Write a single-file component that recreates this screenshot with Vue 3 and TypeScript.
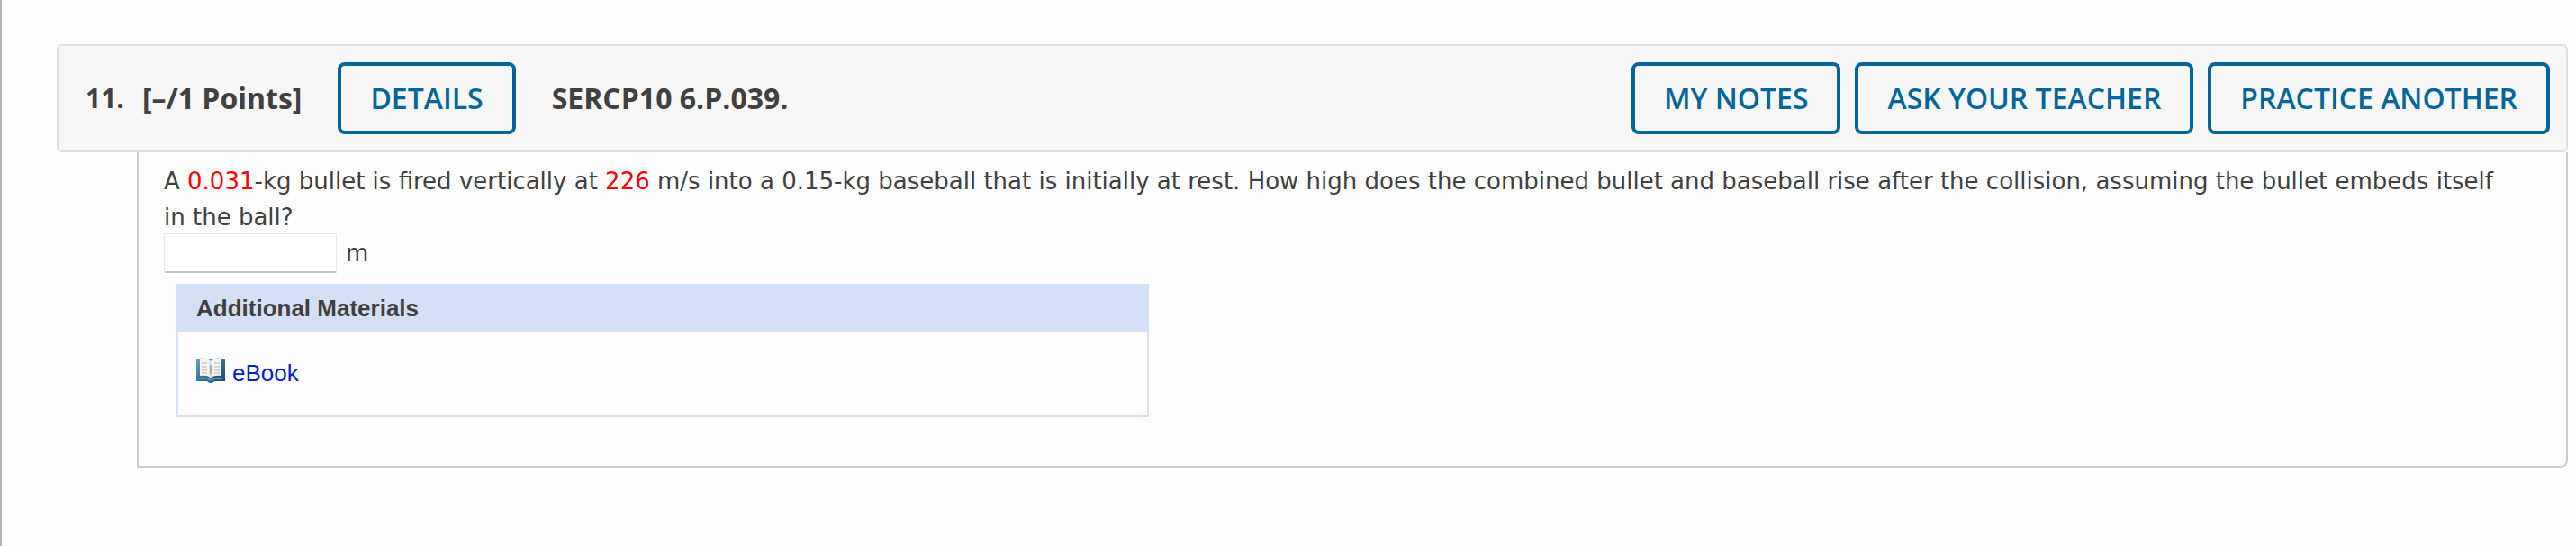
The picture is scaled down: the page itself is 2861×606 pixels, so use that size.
<script setup lang="ts">
import { ref } from 'vue'

const answer = ref('')
const actions: string[] = ['My Notes', 'Ask Your Teacher', 'Practice Another']
</script>

<template>
  <main class="page">
    <article class="question">
      <header class="bar">
        <h2 class="title">
          <span class="number">11.</span>
          <span class="points">[–/1 Points]</span>
        </h2>
        <button type="button" class="btn">Details</button>
        <span class="code">SERCP10 6.P.039.</span>
        <div class="actions">
          <button v-for="label in actions" :key="label" type="button" class="btn">{{ label }}</button>
        </div>
      </header>

      <section class="body">
        <p class="prompt">
          A <span class="value">0.031</span>-kg bullet is fired vertically at
          <span class="value">226</span> m/s into a 0.15-kg baseball that is initially at rest. How high does
          the combined bullet and baseball rise after the collision, assuming the bullet embeds itself in the
          ball?
        </p>
        <div class="answer">
          <input id="height" v-model="answer" class="field" type="text" />
          <label for="height">m</label>
        </div>

        <section class="materials">
          <h3 class="materials-title">Additional Materials</h3>
          <div class="materials-list">
            <a class="ebook" href="#">
              <svg class="book" viewBox="0 0 32 30" aria-hidden="true">
                <defs>
                  <linearGradient id="cover" x1="0" y1="0" x2="1" y2="1">
                    <stop offset="0" stop-color="#6fa3c2" />
                    <stop offset="0.5" stop-color="#2f7198" />
                    <stop offset="1" stop-color="#17486d" />
                  </linearGradient>
                </defs>
                <path d="M0 2H32V26H20Q16 30 12 26H0Z" fill="url(#cover)" />
                <path d="M3 22H13L16 24L19 22H29V24H20L16 26L12 24H3Z" fill="#6593b1" />
                <path d="M4 1Q12 0 16 4Q20 0 28 1V20Q20 19 16 22Q12 19 4 20Z" fill="#f5f4f1" />
                <path d="M4 1Q12 0 16 4Q20 0 28 1" fill="none" stroke="#b9d4e2" />
                <path d="M14 6L16 4L18 6V20L16 22L14 20Z" fill="#dededc" />
                <path d="M15 8H17V18H15Z" fill="#adadab" />
                <path
                  d="M6 6H12M6 10H12M6 14H12M6 17H12M20 6H26M20 10H26M20 14H26M20 17H26"
                  stroke="#d4d4d2"
                  stroke-width="2"
                />
              </svg>
              <span>eBook</span>
            </a>
          </div>
        </section>
      </section>
    </article>
  </main>
</template>

<style>
body {
  margin: 0;
  background: #fefefe;
}
</style>

<style scoped>
.page {
  box-sizing: border-box;
  min-height: 100vh;
  padding: 49px 9px 48px 61px;
  border-left: 2px solid #b0b0b0;
  color: #404040;
}

.bar {
  display: flex;
  align-items: center;
  padding: 18px 18px 18px 30px;
  border: 2px solid #dfdfdf;
  border-radius: 6px;
  background: #f7f7f7;
  font: 700 32px/44px "Open Sans", "Noto Sans", sans-serif;
}

.title {
  display: flex;
  gap: 20px;
  margin: 0 40px 0 0;
  font: inherit;
}

.number {
  font-size: 30px;
}

.btn {
  padding: 14px 32px;
  border: 4px solid #006699;
  border-radius: 8px;
  background: transparent;
  color: #006699;
  font: 600 32px/44px "Open Sans", "Noto Sans", sans-serif;
  text-transform: uppercase;
  white-space: nowrap;
}

.code {
  margin-left: 40px;
}

.actions {
  display: flex;
  gap: 16px;
  margin-left: auto;
}

.body {
  margin-left: 89px;
  padding: 12px 54px 54px 28px;
  border: 2px solid #cccccc;
  border-top: 0;
  border-radius: 0 0 8px 0;
  font: 26px/40px Verdana, "DejaVu Sans", sans-serif;
}

.prompt {
  margin: 0;
}

.value {
  color: #ff0000;
}

.answer {
  display: flex;
  align-items: center;
  gap: 10px;
  height: 40px;
  margin: 0 0 14px;
}

.field {
  box-sizing: border-box;
  width: 192px;
  height: 44px;
  padding: 2px 8px;
  border: 1px solid #e6e6e6;
  border-bottom: 2px solid #c4c4c4;
  border-radius: 2px;
  background: #ffffff;
  color: inherit;
  font: inherit;
}

.materials {
  box-sizing: border-box;
  max-width: 1080px;
  margin-left: 14px;
  border: 2px solid #d5dff7;
  font: 26px/32px "Liberation Sans", Arial, sans-serif;
}

.materials-title {
  margin: 0;
  padding: 9px 20px 11px;
  background: #d5dff7;
  font: inherit;
  font-weight: 700;
}

.materials-list {
  padding: 28px 20px 30px;
  line-height: 34px;
}

.ebook {
  display: flex;
  align-items: flex-start;
  gap: 8px;
  width: fit-content;
  color: #0020cc;
  text-decoration: none;
}

.book {
  width: 32px;
  height: 30px;
}
</style>
